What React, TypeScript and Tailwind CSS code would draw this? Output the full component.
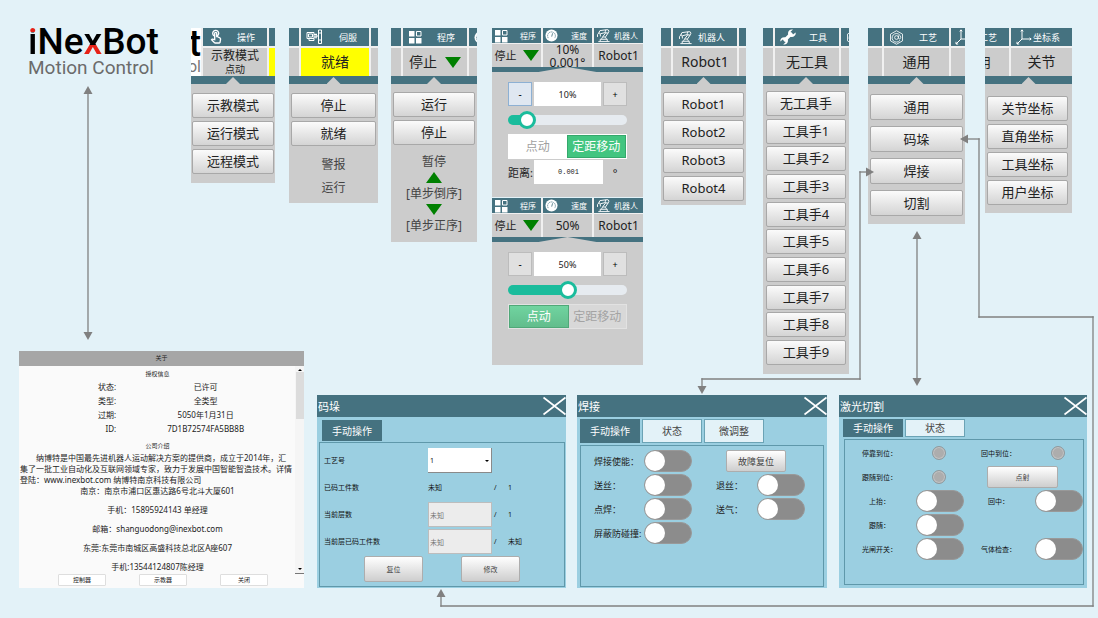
import { useId, useState, type ReactNode } from 'react'
import { MdOutlineTouchApp } from 'react-icons/md'
import { clsx } from 'clsx'

const TOOLS = ['无工具手', '工具手1', '工具手2', '工具手3', '工具手4', '工具手5', '工具手6', '工具手7', '工具手8', '工具手9']

const LICENSE = [
  ['状态:', '已许可'],
  ['类型:', '全类型'],
  ['过期:', '5050年1月31日'],
  ['ID:', '7D1B72574FA5BB8B'],
]

function ServoIcon() {
  return (
    <svg viewBox="0 0 16 16" className="size-4" fill="none" stroke="white" strokeWidth="1">
      <path d="M1 3.5h7v6H1zM2.5 5h4v3h-4zM3 9.5v2h5v-2M8 5.5h3M8 8h3M10 4.500v5M10 7h2" />
      <path d="M12.5 1h3v13.5h-3zM14 3v2M12.5 11h3" />
    </svg>
  )
}

function GridIcon() {
  return (
    <svg viewBox="0 0 14 16" className="h-4 w-[14px] shrink-0" fill="white">
      <path d="M1 2h5.500v5.500H1zM1 9h5.500v5.500H1zM8 9h5.500v5.500H8z" />
      <path d="M8.500 2.500h4.500v4.500H8.500z" fill="none" stroke="white" />
    </svg>
  )
}

function GaugeIcon() {
  return (
    <svg viewBox="0 0 14 14" className="size-[13px]">
      <circle cx="7" cy="7" r="6.5" fill="white" />
      <path d="M3.6 9.8A4.2 4.2 0 1 1 10.4 9.8" fill="none" stroke="#457280" strokeWidth="0.8" strokeDasharray="1.4 0.6" />
      <path d="M7.2 8.2 8.200 4.600" stroke="#457280" strokeWidth="0.9" />
    </svg>
  )
}

function RobotIcon() {
  return (
    <svg viewBox="0 0 16 16" className="size-[15px]" fill="none" stroke="white" strokeWidth="1">
      <path d="M2.500 14.500h12M4.500 14v-2h7.500v2M6 12c0-1.500 1-2.500 2.500-2.500S11 10.500 11 12" />
      <path d="M6.800 9.800 10.600 5M9.800 10 13 5.200" />
      <circle cx="11.800" cy="3.600" r="1.900" />
      <path d="M10.800 1.900 4.200 2.800 3 5l1.600 1.200L10 4.800M3.400 4.800 1.600 7v2.500M4.400 6.200 4.800 9" />
    </svg>
  )
}

function WrenchIcon() {
  return (
    <svg viewBox="0 0 16 16" className="size-4">
      <path d="M4 12 12 4" stroke="white" strokeWidth="3.2" />
      <path
        fill="white"
        d="M15.6 3.4 13 5.4 10.9 4.8 10.6 2.8 13 .6C10.6-.1 8 1.5 8 4.2 8 6.4 9.6 8 11.700 8 14.500 8 16.200 5.600 15.600 3.400ZM.4 12.600 2.700 10.600 5.200 11.200 5.600 13.300 3.200 15.500C5.600 16.100 8 14.400 8 11.800 8 9.600 6.400 8.200 4.300 8.200 1.600 8.200-.1 10.200.4 12.600Z"
      />
    </svg>
  )
}

function HexIcon() {
  return (
    <svg viewBox="0 0 16 16" className="size-[15px]" fill="none" stroke="white" strokeWidth="0.9">
      <path d="M8 .8 14.400 4.400v7.200L8 15.200 1.600 11.600V4.400z" />
      <path d="M11.800 10.800A4.600 4.600 0 1 1 12.500 8c0 1.800-2.200 2-2.400.4V5.800" />
      <circle cx="8" cy="8" r="2" />
    </svg>
  )
}

function AxesIcon() {
  return (
    <svg viewBox="0 0 16 16" className="size-4" fill="none" stroke="white" strokeWidth="1">
      <path d="M6 1v9h9M6 10l-5 5M4.800 2.400 6 .8l1.200 1.600M13.600 8.800 15.200 10l-1.600 1.200M1 12.800V15h2.200" />
    </svg>
  )
}

function Triangle({ up }: { up?: boolean }) {
  return (
    <svg viewBox="0 0 16 11" className={clsx('h-[11px] w-4 shrink-0', up && 'rotate-180')}>
      <path d="M0 0h16L8 11z" fill="#008000" />
    </svg>
  )
}

function MenuButton({ children, tall }: { children: ReactNode; tall?: boolean }) {
  return (
    <button
      className={clsx(
        'block w-full shrink-0 rounded-[2px] border border-[#a8a8a8] bg-linear-to-b from-[#fbfbfb] to-[#d4d4d4] text-center text-[13px] leading-none text-[#222]',
        tall ? 'h-[26px]' : 'h-[25px]',
      )}
    >
      {children}
    </button>
  )
}

type StripProps = {
  icon: ReactNode
  title: string
  value: ReactNode
  highlight?: boolean
}

function StatusCell({ icon, title, value, highlight }: StripProps) {
  return (
    <div className="flex min-w-0 flex-1 flex-col gap-[2px]">
      <div className="flex h-[18px] items-center justify-between bg-[#457280] pr-3 pl-[5px] text-[9px] leading-none whitespace-nowrap text-white">
        {icon}
        <span>{title}</span>
      </div>
      <div
        className={clsx(
          'flex h-7 items-center justify-center gap-2 text-[14px] leading-none whitespace-nowrap text-[#222]',
          highlight ? 'bg-[#ffff00]' : 'bg-[#cccccc]',
        )}
      >
        {value}
      </div>
    </div>
  )
}

// Clipped neighbour cell at the side of a status strip
function Sliver({ className, head, body, yellow }: { className: string; head?: ReactNode; body?: ReactNode; yellow?: boolean }) {
  return (
    <div className={clsx('flex shrink-0 flex-col gap-[2px] overflow-hidden', className)}>
      <div className="flex h-[18px] items-center overflow-hidden bg-[#457280] text-[9px] leading-none whitespace-nowrap text-white">{head}</div>
      <div
        className={clsx(
          'flex h-7 items-center overflow-hidden text-[13px] leading-none whitespace-nowrap text-[#222]',
          yellow ? 'bg-[#ffff00]' : 'bg-[#cccccc]',
        )}
      >
        {body}
      </div>
    </div>
  )
}

function Notch({ wide }: { wide?: boolean }) {
  return (
    <div className={clsx('flex items-end justify-center bg-[#457280]', wide ? 'h-[5px]' : 'h-2')}>
      <div
        className={clsx(
          'bg-[#cccccc] [clip-path:polygon(50%_0,100%_100%,0_100%)]',
          wide ? 'h-[5px] w-[58px]' : 'h-[7px] w-[14px]',
        )}
      />
    </div>
  )
}

type MenuPanelProps = StripProps & {
  className: string
  left: ReactNode
  right?: ReactNode
  bodyClass: string
  children: ReactNode
}

function MenuPanel({ className, left, right, bodyClass, children, ...cell }: MenuPanelProps) {
  return (
    <section className={clsx('min-w-0 bg-[#cccccc]', className)}>
      <div className="flex gap-[2px] bg-[#f0f0f0]">
        {left}
        <StatusCell {...cell} />
        {right}
      </div>
      <Notch />
      <div className={bodyClass}>{children}</div>
    </section>
  )
}

function SpeedCell({ icon, title, children }: { icon: ReactNode; title: string; children: ReactNode }) {
  return (
    <div className="flex min-w-0 flex-1 flex-col gap-px overflow-hidden">
      <div className="flex h-[15px] items-center justify-between bg-[#457280] pr-[5px] pl-[2px] text-[8px] leading-none whitespace-nowrap text-white">
        {icon}
        <span>{title}</span>
      </div>
      <div className="flex h-[23px] items-center justify-center gap-[6px] overflow-hidden bg-[#cccccc] text-[12px] leading-none whitespace-nowrap text-[#222]">
        {children}
      </div>
    </div>
  )
}

function SpeedPanel({ initial, step }: { initial: number; step?: string }) {
  const [speed, setSpeed] = useState(initial)
  const inching = Boolean(step)
  const stepId = useId()

  return (
    <section className={clsx('bg-[#cccccc]', inching ? 'h-[169px]' : 'h-[167px]')}>
      <div className="flex gap-[2px] bg-[#f0f0f0]">
        <SpeedCell icon={<GridIcon />} title="程序">
          <span className="text-[11px]">停止</span>
          <Triangle />
        </SpeedCell>
        <SpeedCell icon={<GaugeIcon />} title="速度">
          {inching ? (
            <span className="text-center leading-[13px]">
              {speed}%<br />
              {step}°
            </span>
          ) : (
            <span>{speed}%</span>
          )}
        </SpeedCell>
        <SpeedCell icon={<RobotIcon />} title="机器人">
          <span>Robot1</span>
        </SpeedCell>
      </div>
      <Notch wide />
      <div className="flex flex-col px-4 pt-[10px]">
        <div className="flex h-6 gap-[2px]">
          <button
            onClick={() => setSpeed(Math.max(0, speed - 5))}
            className={clsx(
              'w-6 border text-[10px] leading-none',
              inching ? 'border-[#8db0d3] bg-[#dfe7f1]' : 'border-[#bcbcbc] bg-[#e0e0e0]',
            )}
          >
            -
          </button>
          <input
            aria-label="速度"
            readOnly
            value={`${speed}%`}
            className="min-w-0 flex-1 bg-white text-center text-[9px] leading-none text-[#222]"
          />
          <button
            onClick={() => setSpeed(Math.min(100, speed + 5))}
            className="w-6 border border-[#bcbcbc] bg-[#e0e0e0] text-[9px] leading-none"
          >
            +
          </button>
        </div>
        <input
          type="range"
          aria-label="速度调节"
          value={speed}
          onChange={e => setSpeed(Number(e.target.value))}
          className="mt-[9px] mb-[9px] block h-[10px] w-full appearance-none rounded-full [&::-webkit-slider-thumb]:size-[18px] [&::-webkit-slider-thumb]:appearance-none [&::-webkit-slider-thumb]:rounded-full [&::-webkit-slider-thumb]:border-[3px] [&::-webkit-slider-thumb]:border-[#1abc9c] [&::-webkit-slider-thumb]:bg-white"
          style={{ background: `linear-gradient(to right, #1abc9c ${speed}%, #e6ebf0 ${speed}%)` }}
        />
        <div className={clsx('flex h-[25px] border text-[12px] leading-none', inching ? 'border-white bg-white' : 'border-[#e2e2e2] bg-[#d8d8d8]')}>
          <button className={clsx('flex-1', inching ? 'bg-white text-[#a0a0a0]' : 'border border-[#50a878] bg-linear-to-b from-[#70d4a0] to-[#62bd8c] text-white')}>
            点动
          </button>
          <button className={clsx('flex-1 whitespace-nowrap', inching ? 'border border-[#35a86c] bg-[#42c580] text-white' : 'text-[#a3a3a3]')}>
            定距移动
          </button>
        </div>
        {step && (
          <div className="mt-px flex h-6 items-center text-[11px] leading-none text-[#222]">
            <label htmlFor={stepId} className="w-[26px] shrink-0 whitespace-nowrap">距离:</label>
            <input
              id={stepId}
              defaultValue={step}
              className="h-6 min-w-0 flex-1 bg-white text-center font-['Liberation_Mono',monospace] text-[7px]"
            />
            <span className="w-6 text-center">°</span>
          </div>
        )}
      </div>
    </section>
  )
}

function Logo() {
  return (
    <div className="col-start-2 min-w-0 font-['Roboto',sans-serif] whitespace-nowrap">
      <h1 className="text-[37px] leading-[28px] font-medium text-black">
        <span className="bg-linear-to-b from-[#e62117] from-28% to-black to-28% bg-clip-text text-transparent">i</span>Ne
        <span className="bg-linear-to-b from-black from-58% to-[#e62117] to-58% bg-clip-text text-transparent">x</span>Bot
      </h1>
      <p className="mt-[2px] text-[19px] leading-[20px] text-[#6b6b6b]">Motion Control</p>
    </div>
  )
}

function AboutDialog() {
  return (
    <section className="col-start-2 flex h-[237px] min-w-0 flex-col bg-[#fafafa] text-[8px] text-[#222]">
      <h2 className="h-[15px] shrink-0 bg-[#a6a6a6] text-center text-[6px] leading-[15px]">关于</h2>
      <div className="flex min-h-0 flex-1">
        <div className="min-w-0 flex-1 overflow-hidden pl-px whitespace-nowrap">
          <h3 className="pt-[2px] text-center text-[6px] leading-[12px]">授权信息</h3>
          <table className="w-full">
            <tbody>
              {LICENSE.map(([name, value]) => (
                <tr key={name} className="h-[14px] leading-[12px]">
                  <th className="w-[35%] p-0 text-right font-normal">{name}</th>
                  <td className="p-0 text-center">{value}</td>
                </tr>
              ))}
            </tbody>
          </table>
          <h3 className="pt-1 text-center text-[6px] leading-[12px]">公司介绍</h3>
          <p className="indent-4 leading-[11px]">
            纳博特是中国最先进机器人运动解决方案的提供商，成立于2014年，汇<br />
            集了一批工业自动化及互联网领域专家，致力于发展中国智能智造技术。详情<br />
            登陆：www.inexbot.com 纳博特南京科技有限公司
          </p>
          <div className="flex flex-col gap-2 text-center leading-[11px]">
            <p>南京：南京市浦口区惠达路6号北斗大厦601</p>
            <p>手机：15895924143 单经理</p>
            <p>邮箱：shanguodong@inexbot.com</p>
            <p>东莞:东莞市南城区高盛科技总北区A座607</p>
            <p>手机:13544124807陈经理</p>
          </div>
        </div>
        <div className="flex w-[9px] shrink-0 flex-col items-center justify-between bg-[#f5f5f5]">
          <div className="flex w-full flex-col items-center gap-px pt-[3px]">
            <svg viewBox="0 0 4 2" className="h-[2px] w-1"><path d="M0 2h4L2 0z" /></svg>
            <div className="h-[47px] w-[8px] bg-[#dcdcdc]" />
          </div>
          <div className="flex w-full flex-col items-center border-b border-[#777] pb-[3px]">
            <svg viewBox="0 0 4 2" className="h-[2px] w-1"><path d="M0 0h4L2 2z" /></svg>
          </div>
        </div>
      </div>
      <div className="flex h-[14px] shrink-0 items-start justify-between pr-9 pl-[39px] text-[6px] leading-none">
        {['控制器', '示教器', '关闭'].map(label => (
          <button key={label} className="h-3 w-12 rounded-[1px] border border-[#dedede] bg-white">{label}</button>
        ))}
      </div>
    </section>
  )
}

function Dialog({ title, tabs, className, tabClass, frameClass, children }: {
  title: string
  tabs: string[]
  className: string
  tabClass: string
  frameClass: string
  children: ReactNode
}) {
  const [active, setActive] = useState(tabs[0])

  return (
    <section className={clsx('flex h-[193px] min-w-0 flex-col bg-[#9bcfe1]', className)}>
      <header className="flex h-[22px] shrink-0 items-center justify-between bg-[#457280] pl-[1px] text-[11px] leading-none text-white">
        <h2>{title}</h2>
        <button aria-label="关闭" className="h-[20px] w-[23px]">
          <svg viewBox="0 0 23 20" className="h-[20px] w-[23px]" stroke="white" strokeWidth="1.6">
            <path d="M.5 1.500 22.500 18.500M22.500 1.500.5 18.500" />
          </svg>
        </button>
      </header>
      <div className={clsx('flex shrink-0 gap-[2px]', tabClass)}>
        {tabs.map(tab => (
          <button
            key={tab}
            onClick={() => setActive(tab)}
            className={clsx(
              'h-full w-[60px] border text-[10px] leading-none whitespace-nowrap',
              tab === active ? 'border-[#457280] bg-[#457280] text-white' : 'border-[#6ba3b5] bg-[#e3f2f8] text-[#444]',
            )}
          >
            {tab}
          </button>
        ))}
      </div>
      <div className={clsx('min-h-0 flex-1 border border-[#5f98aa]', frameClass)}>{children}</div>
    </section>
  )
}

function PushButton({ className, children }: { className: string; children: ReactNode }) {
  return (
    <button
      className={clsx(
        'rounded-[2px] border border-[#adadad] bg-linear-to-b from-white to-[#cecece] leading-none text-[#444]',
        className,
      )}
    >
      {children}
    </button>
  )
}

function Toggle({ id }: { id: string }) {
  return (
    <input
      id={id}
      type="checkbox"
      role="switch"
      className="block h-[22px] w-12 shrink-0 appearance-none rounded-full border border-[#999] bg-[#8c8c8c] before:block before:size-5 before:rounded-full before:bg-white checked:bg-[#1abc9c] checked:before:ml-auto"
    />
  )
}

function ToggleRow({ label, labelClass }: { label: string; labelClass: string }) {
  const id = useId()
  return (
    <div className="flex h-6 items-center">
      <label htmlFor={id} className={clsx('shrink-0 whitespace-nowrap', labelClass)}>{label}</label>
      <Toggle id={id} />
    </div>
  )
}

function Lamp({ label }: { label: string }) {
  return (
    <div className="flex h-6 items-center">
      <span className="w-[71px] pr-1 pl-[2px] text-center whitespace-nowrap">{label}</span>
      <span className="ml-4 size-[14px] rounded-full border border-[#8f9a9e] bg-[#adadad] shadow-[inset_0_0_0_1px_#c4c4c4]" />
    </div>
  )
}

function PalletDialog() {
  return (
    <Dialog title="码垛" tabs={['手动操作']} className="col-start-4" tabClass="h-[21px] mt-[3px] pl-[5px]" frameClass="mt-[1px] ml-[2px] mr-px mb-px">
      <div className="flex flex-col gap-[2px] pt-[5px] pl-1 text-[7px] leading-none text-[#111]">
        <div className="flex h-[25px] items-center">
          <label htmlFor="craft" className="w-[104px]">工艺号</label>
          <div className="grid h-[25px] w-16 items-center bg-white">
            <select id="craft" className="col-start-1 row-start-1 h-full w-full appearance-none border-r border-b border-[#8a8a8a] pl-[2px]">
              <option>1</option>
            </select>
            <svg viewBox="0 0 4 2" className="pointer-events-none col-start-1 row-start-1 mr-[3px] h-[2px] w-1 justify-self-end"><path d="M0 0h4L2 2z" /></svg>
          </div>
        </div>
        <div className="flex h-[25px] items-center">
          <span className="w-[104px]">已码工件数</span>
          <span className="w-[66px]">未知</span>
          <span className="w-[14px]">/</span>
          <span>1</span>
        </div>
        <div className="flex h-[25px] items-center">
          <label htmlFor="layer" className="w-[104px]">当前层数</label>
          <input id="layer" disabled value="未知" className="mr-[2px] h-[25px] w-16 border border-[#bdbdbd] bg-[#ececec] pl-px text-[#777]" />
          <span className="w-[14px]">/</span>
          <span>1</span>
        </div>
        <div className="flex h-[25px] items-center">
          <label htmlFor="layer-done" className="w-[104px]">当前层已码工件数</label>
          <input id="layer-done" disabled value="未知" className="mr-[2px] h-[25px] w-16 border border-[#bdbdbd] bg-[#ececec] pl-px text-[#777]" />
          <span className="w-[14px]">/</span>
          <span>未知</span>
        </div>
        <div className="flex gap-[38px] pl-10">
          <PushButton className="h-[26px] w-[59px]">复位</PushButton>
          <PushButton className="h-[26px] w-[59px]">修改</PushButton>
        </div>
      </div>
    </Dialog>
  )
}

function WeldDialog() {
  return (
    <Dialog title="焊接" tabs={['手动操作', '状态', '微调整']} className="col-start-6" tabClass="h-6 mt-[2px] pl-[3px]" frameClass="mt-[2px] ml-[3px] mr-[3px] mb-px">
      <div className="flex justify-between pt-[3px] pr-[18px] pl-[13px] text-[9px] leading-none text-[#222]">
        <div>
          {['焊接使能：', '送丝：', '点焊：', '屏蔽防碰撞:'].map(label => (
            <ToggleRow key={label} label={label} labelClass="w-[50px]" />
          ))}
        </div>
        <div>
          <div className="flex h-6 items-center pl-[10px]">
            <PushButton className="h-[22px] w-[60px]">故障复位</PushButton>
          </div>
          {['退丝：', '送气：'].map(label => (
            <ToggleRow key={label} label={label} labelClass="w-[41px]" />
          ))}
        </div>
      </div>
    </Dialog>
  )
}

function LaserDialog() {
  return (
    <Dialog title="激光切割" tabs={['手动操作', '状态']} className="col-start-8" tabClass="h-[18px] mt-[2px] pl-1" frameClass="mt-[2px] ml-[5px] mr-[3px] mb-[3px]">
      <div className="flex justify-between pt-[1px] pr-[3px] text-[7px] leading-none text-[#111]">
        <div>
          <Lamp label="停靠到位：" />
          <Lamp label="跟随到位：" />
          {['上抬：', '跟随：', '光闸开关：'].map(label => (
            <ToggleRow key={label} label={label} labelClass="w-[71px] pl-[2px] pr-1 text-center" />
          ))}
        </div>
        <div>
          <Lamp label="回中到位：" />
          <div className="flex h-6 items-center pl-[23px]">
            <PushButton className="h-[22px] w-[71px]">点射</PushButton>
          </div>
          <ToggleRow label="回中：" labelClass="w-[71px] pl-[2px] pr-1 text-center" />
          <div className="h-6" />
          <ToggleRow label="气体检查：" labelClass="w-[71px] pl-[2px] pr-1 text-center" />
        </div>
      </div>
    </Dialog>
  )
}

const HEAD_SHAPES = {
  up: 'M0 0-4.5 8h9z',
  down: 'M0 0-4.5-8h9z',
  left: 'M0 0 8-4.5v9z',
  right: 'M0 0-8-4.5v9z',
}

function ArrowHead({ x, y, dir }: { x: number; y: number; dir: keyof typeof HEAD_SHAPES }) {
  return (
    <svg x={px(x)} y={y} overflow="visible">
      <path d={HEAD_SHAPES[dir]} fill="#808080" />
    </svg>
  )
}

// Horizontal positions are shares of the 1098 grid units used by both rows
const px = (units: number) => `${(units / 1098) * 100}%`

const WIRES: [number, number, number, number][] = [
  [88, 92, 88, 334],
  [917, 237, 917, 380],
  [966, 139, 979, 139],
  [979, 139, 979, 317],
  [979, 317, 1093, 317],
  [1093, 317, 1093, 606],
  [1093, 606, 441, 606],
  [441, 606, 441, 594],
  [868, 172, 860, 172],
  [860, 172, 860, 379],
  [860, 379, 702, 379],
  [702, 379, 702, 388],
]

function Connectors() {
  return (
    <svg className="pointer-events-none absolute inset-0 h-full w-full" aria-hidden="true">
      {WIRES.map(([x1, y1, x2, y2], i) => (
        <line key={i} x1={px(x1)} y1={y1} x2={px(x2)} y2={y2} stroke="#808080" strokeWidth="1.3" strokeLinecap="square" />
      ))}
      <ArrowHead x={88} y={86} dir="up" />
      <ArrowHead x={88} y={340} dir="down" />
      <ArrowHead x={917} y={231} dir="up" />
      <ArrowHead x={917} y={386} dir="down" />
      <ArrowHead x={960} y={139} dir="left" />
      <ArrowHead x={441} y={589} dir="up" />
      <ArrowHead x={874} y={172} dir="right" />
      <ArrowHead x={702} y={394} dir="down" />
    </svg>
  )
}

export default function App() {
  return (
    <main className="relative min-h-screen bg-[#e3f2f8] pt-7 pb-[30px] font-['Noto_Sans','Noto_Sans_CJK_SC',sans-serif]">
      <div className="grid grid-cols-[28fr_130fr_33fr_84fr_14fr_89fr_13fr_86fr_15fr_151fr_18fr_85fr_17fr_86fr_19fr_97fr_20fr_87fr_26fr] items-start">
        <Logo />

        <MenuPanel
          className="col-start-4"
          icon={<MdOutlineTouchApp className="size-4 text-white" />}
          title="操作"
          value={<span className="text-center text-[12px] leading-[13px]">示教模式<br /><span className="text-[10px]">点动</span></span>}
          left={
            <div aria-hidden="true" className="flex h-12 w-[10px] shrink-0 flex-col items-end justify-end overflow-hidden bg-white font-['Roboto',sans-serif]">
              <span className="text-[37px] leading-[28px] font-medium text-black">t</span>
              <span className="text-[16px] leading-[18px] text-[#777]">ol</span>
            </div>
          }
          right={<Sliver className="w-[6px]" yellow />}
          bodyClass="flex flex-col gap-[3px] px-px pt-[9px] pb-[9px]"
        >
          <MenuButton>示教模式</MenuButton>
          <MenuButton>运行模式</MenuButton>
          <MenuButton>远程模式</MenuButton>
        </MenuPanel>

        <MenuPanel
          className="col-start-6"
          icon={<ServoIcon />}
          title="伺服"
          value="就绪"
          highlight
          left={<Sliver className="w-[10px]" />}
          right={<Sliver className="w-[7px]" />}
          bodyClass="flex flex-col gap-[3px] px-[2px] pt-[9px] pb-[5px]"
        >
          <MenuButton>停止</MenuButton>
          <MenuButton>就绪</MenuButton>
          <p className="mt-[6px] text-center text-[12px] leading-5 text-[#444]">警报</p>
          <p className="text-center text-[12px] leading-5 text-[#444]">运行</p>
        </MenuPanel>

        <MenuPanel
          className="col-start-8"
          icon={<GridIcon />}
          title="程序"
          value={<>停止<Triangle /></>}
          left={<Sliver className="w-[10px]" />}
          right={<Sliver className="w-2" head={<span className="shrink-0 pl-[5px]"><GaugeIcon /></span>} />}
          bodyClass="flex flex-col items-center px-[2px] pt-2 pb-[6px] text-[12px] leading-5 whitespace-nowrap text-[#444]"
        >
          <div className="flex w-full flex-col gap-[3px]">
            <MenuButton>运行</MenuButton>
            <MenuButton>停止</MenuButton>
          </div>
          <p className="mt-[7px]">暂停</p>
          <Triangle up />
          <p className="mt-px">[单步倒序]</p>
          <Triangle />
          <p className="mt-px">[单步正序]</p>
        </MenuPanel>

        <div className="col-start-10 flex min-w-0 flex-col gap-px">
          <SpeedPanel initial={10} step="0.001" />
          <SpeedPanel initial={50} />
        </div>

        <MenuPanel
          className="col-start-12"
          icon={<RobotIcon />}
          title="机器人"
          value="Robot1"
          left={<Sliver className="w-[10px]" />}
          right={<Sliver className="w-[7px]" />}
          bodyClass="flex flex-col gap-[3px] px-[2px] pt-2 pb-1"
        >
          {['Robot1', 'Robot2', 'Robot3', 'Robot4'].map(name => <MenuButton key={name}>{name}</MenuButton>)}
        </MenuPanel>

        <MenuPanel
          className="col-start-14"
          icon={<WrenchIcon />}
          title="工具"
          value="无工具"
          left={<Sliver className="w-[10px]" />}
          right={<Sliver className="w-2" head={<span className="shrink-0 pl-[5px]"><HexIcon /></span>} />}
          bodyClass="flex h-[290px] flex-col justify-between px-[3px] pt-[7px] pb-[9px]"
        >
          {TOOLS.map(name => <MenuButton key={name}>{name}</MenuButton>)}
        </MenuPanel>

        <MenuPanel
          className="col-start-16"
          icon={<HexIcon />}
          title="工艺"
          value="通用"
          left={<Sliver className="w-[14px]" />}
          right={<Sliver className="w-[14px]" head={<span className="shrink-0 pl-1"><AxesIcon /></span>} />}
          bodyClass="flex flex-col gap-[6px] px-[2px] pt-[10px] pb-2"
        >
          {['通用', '码垛', '焊接', '切割'].map(name => <MenuButton key={name} tall>{name}</MenuButton>)}
        </MenuPanel>

        <MenuPanel
          className="col-start-18"
          icon={<AxesIcon />}
          title="坐标系"
          value="关节"
          left={
            <Sliver
              className="w-6"
              head={<span className="ml-[-6px]">工艺</span>}
              body={<span className="ml-[-7px]">用</span>}
            />
          }
          bodyClass="flex flex-col gap-[3px] pt-3 pr-1 pb-2 pl-[2px]"
        >
          {['关节坐标', '直角坐标', '工具坐标', '用户坐标'].map(name => <MenuButton key={name}>{name}</MenuButton>)}
        </MenuPanel>
      </div>

      <div className="-mt-[23px] grid grid-cols-[19fr_285fr_13fr_249fr_11fr_250fr_12fr_248fr_11fr] items-end">
        <AboutDialog />
        <PalletDialog />
        <WeldDialog />
        <LaserDialog />
      </div>

      <Connectors />
    </main>
  )
}
